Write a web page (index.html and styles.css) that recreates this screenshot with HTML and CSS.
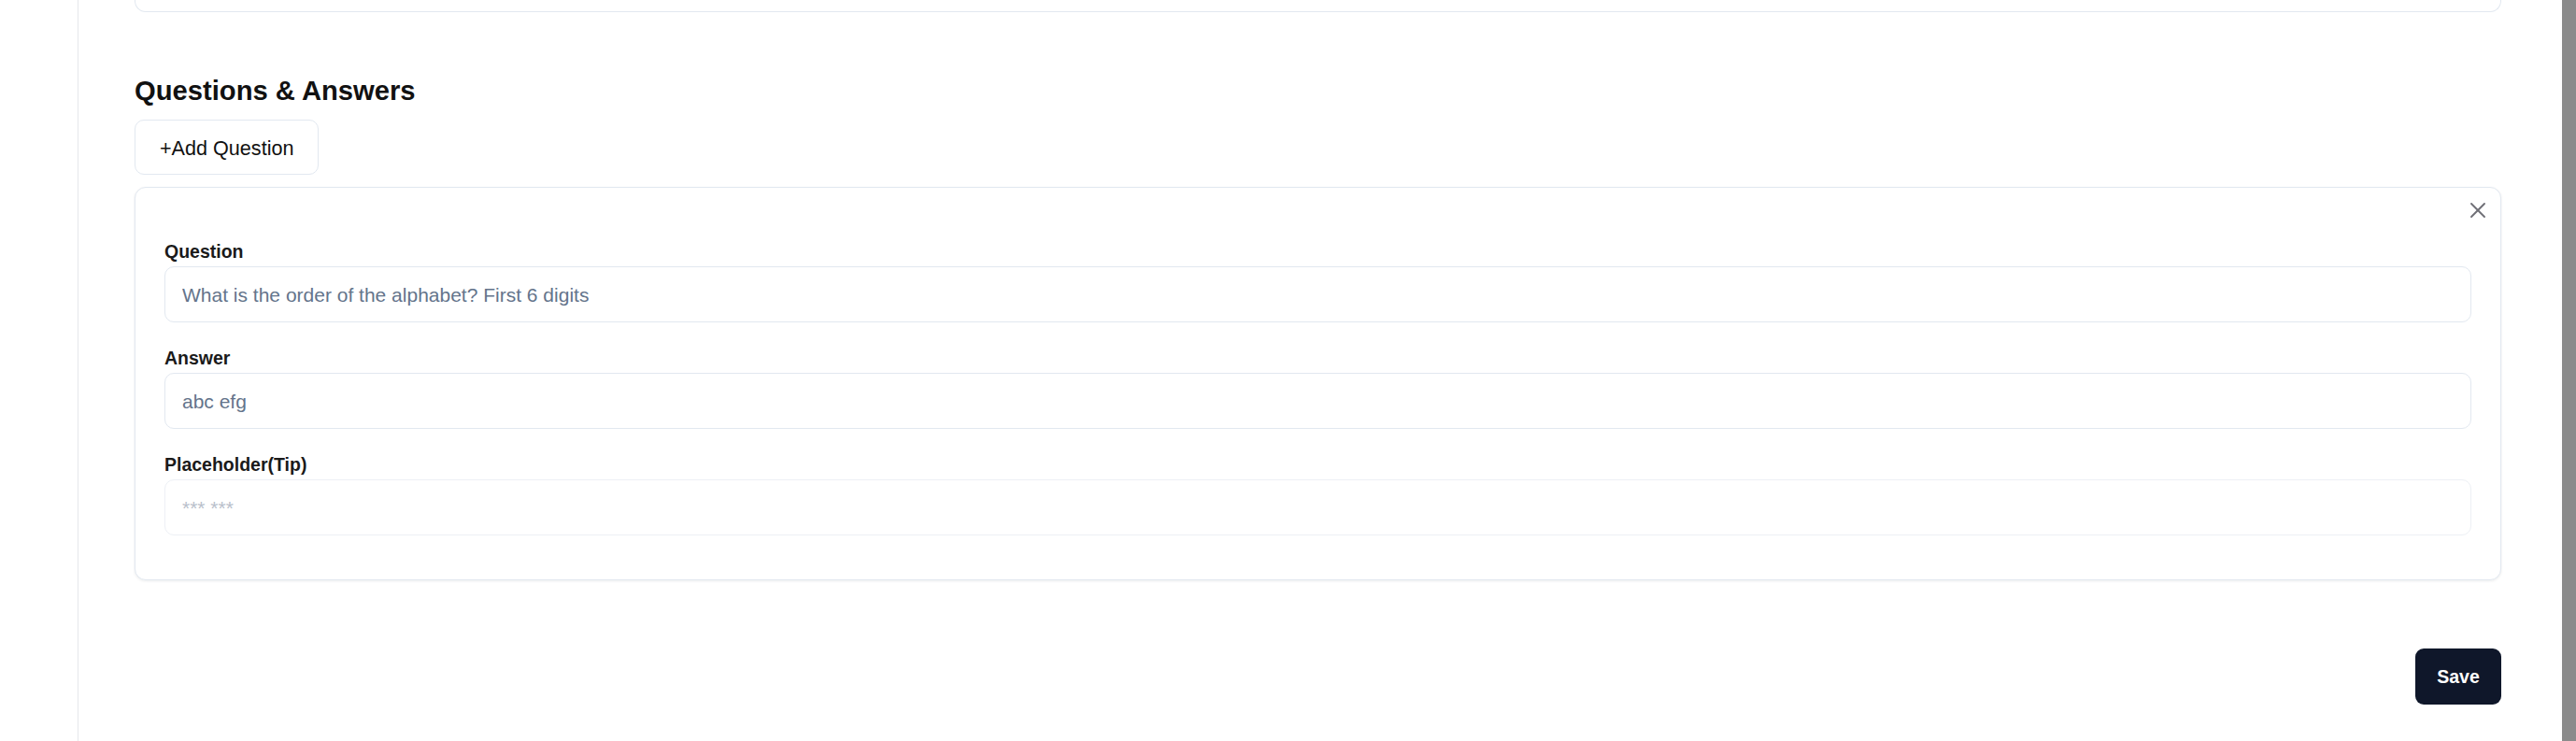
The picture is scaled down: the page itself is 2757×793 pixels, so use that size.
FILE: index.html
```html
<!DOCTYPE html>
<html lang="en">
<head>
<meta charset="utf-8">
<title>Questions &amp; Answers</title>
<link rel="stylesheet" href="styles.css">
</head>
<body>
<div class="app">
  <aside class="sidebar"></aside>
  <main class="main">
    <div class="prev-card"></div>
    <section class="qa">
      <h2 class="qa-title">Questions &amp; Answers</h2>
      <button class="btn-outline" type="button">+Add Question</button>
      <div class="qa-card">
        <button class="close-btn" type="button" aria-label="Remove question">
          <svg viewBox="0 0 24 24" width="28" height="28" fill="none" stroke="currentColor" stroke-width="1.6" stroke-linecap="round" stroke-linejoin="round"><path d="M18 6 6 18"/><path d="m6 6 12 12"/></svg>
        </button>
        <div class="field">
          <label class="field-label">Question</label>
          <input class="field-input" type="text" value="What is the order of the alphabet? First 6 digits">
        </div>
        <div class="field">
          <label class="field-label">Answer</label>
          <input class="field-input" type="text" value="abc efg">
        </div>
        <div class="field">
          <label class="field-label">Placeholder(Tip)</label>
          <input class="field-input field-input-light" type="text" placeholder="*** ***">
        </div>
      </div>
    </section>
    <div class="actions">
      <button class="btn-primary" type="button">Save</button>
    </div>
  </main>
  <div class="scrollbar"></div>
</div>
</body>
</html>
```

FILE: styles.css
```css
* { box-sizing: border-box; }

html, body {
  margin: 0;
  padding: 0;
  background: #ffffff;
  font-family: "Liberation Sans", Arial, sans-serif;
  color: #111111;
  overflow: hidden;
}

.app {
  display: flex;
  height: 793px;
}

.sidebar {
  width: 84px;
  flex: 0 0 84px;
  border-right: 1px solid #e5e7eb;
}

.main {
  flex: 1;
  padding: 0 65px 0 60px;
  min-width: 0;
}

.scrollbar {
  flex: 0 0 15px;
  width: 15px;
  background: #8b8b8b;
}

.prev-card {
  height: 13px;
  border: 1px solid #e2e8f0;
  border-top: none;
  border-radius: 0 0 12px 12px;
}

.qa {
  margin-top: 65px;
}

.qa-title {
  margin: 0 0 12px;
  font-size: 29.2px;
  line-height: 38px;
  font-weight: 700;
  color: #111111;
}

.btn-outline {
  display: block;
  height: 59px;
  padding: 3px 26px 0;
  background: #ffffff;
  border: 1px solid #e2e8f0;
  border-radius: 10px;
  font-family: inherit;
  font-size: 21.6px;
  color: #111111;
  cursor: pointer;
}

.qa-card {
  position: relative;
  margin-top: 13px;
  padding: 54px 31px 47px;
  border: 1px solid #e2e8f0;
  border-radius: 12px;
  background: #ffffff;
  box-shadow: 0 1px 3px rgba(15, 23, 42, 0.08);
  display: flex;
  flex-direction: column;
  gap: 24px;
}

.close-btn {
  position: absolute;
  top: 10px;
  right: 10px;
  width: 28px;
  height: 28px;
  padding: 0;
  border: none;
  background: transparent;
  color: #6f6f76;
  cursor: pointer;
  display: flex;
}

.field {
  display: flex;
  flex-direction: column;
  gap: 2px;
}

.field-label {
  font-size: 19.5px;
  line-height: 28px;
  font-weight: 700;
  color: #1a1a1a;
}

.field-input {
  height: 60px;
  padding: 2px 18px 0;
  border: 1px solid #e2e8f0;
  border-radius: 10px;
  font-family: inherit;
  font-size: 21px;
  color: #64748b;
  background: #ffffff;
  outline: none;
  width: 100%;
}

.field-input-light {
  border-color: #edf0f5;
}

.field-input::placeholder {
  color: #b9c0cb;
}

.actions {
  display: flex;
  justify-content: flex-end;
  margin-top: 73px;
}

.btn-primary {
  width: 92px;
  height: 60px;
  border: none;
  border-radius: 9px;
  background: #0f172a;
  color: #ffffff;
  font-family: inherit;
  font-size: 19.5px;
  font-weight: 700;
  cursor: pointer;
}
```
